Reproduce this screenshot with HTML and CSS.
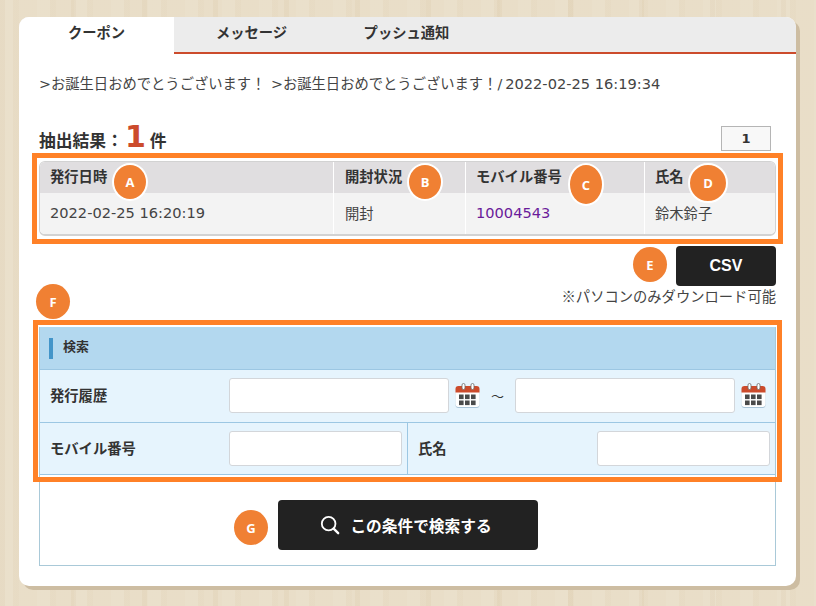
FILE: index.html
```html
<!DOCTYPE html>
<html lang="ja">
<head>
  <meta charset="UTF-8">
  <meta name="viewport" content="width=device-width, initial-scale=1.0">
  <title>クーポン</title>
  <link rel="stylesheet" href="styles.css">
</head>
<body>
  <svg class="defs" width="0" height="0">
    <symbol id="cal" viewBox="0 0 25 25">
      <rect x="0.5" y="3" width="24" height="22" rx="3" fill="#a9c4d8"/>
      <rect x="0.5" y="3" width="24" height="21" rx="3" fill="#ffffff"/>
      <path d="M0.5 9.5V6a3 3 0 0 1 3-3h18a3 3 0 0 1 3 3v3.5z" fill="#cc4b2c"/>
      <rect x="7" y="0.5" width="3" height="6" rx="1.5" fill="#fff" stroke="#6b6b6b" stroke-width="0.8"/>
      <rect x="16" y="0.5" width="3" height="6" rx="1.5" fill="#fff" stroke="#6b6b6b" stroke-width="0.8"/>
      <g fill="#4a4a4a">
        <rect x="4" y="11.5" width="4.6" height="4.6"/><rect x="10" y="11.5" width="4.6" height="4.6"/><rect x="16" y="11.5" width="4.6" height="4.6"/>
        <rect x="4" y="17.5" width="4.6" height="4.6"/><rect x="10" y="17.5" width="4.6" height="4.6"/><rect x="16" y="17.5" width="4.6" height="4.6"/>
      </g>
    </symbol>
  </svg>

  <div class="card">
    <div class="tabs">
      <div class="tab active">クーポン</div>
      <div class="tab">メッセージ</div>
      <div class="tab">プッシュ通知</div>
    </div>

    <div class="content">
      <p class="msg">&gt;お誕生日おめでとうございます！ &gt;お誕生日おめでとうございます！/<span class="num">2022-02-25 16:19:34</span></p>

      <div class="result-head">
        <div class="result-count">抽出結果：<span class="big">1</span> 件</div>
        <div class="pager">1</div>
      </div>

      <div class="result-wrap">
        <table class="result">
          <tr>
            <th class="c1">発行日時</th>
            <th class="c2">開封状況</th>
            <th class="c3">モバイル番号</th>
            <th>氏名</th>
          </tr>
          <tr>
            <td class="num">2022-02-25 16:20:19</td>
            <td>開封</td>
            <td class="num link">10004543</td>
            <td>鈴木鈴子</td>
          </tr>
        </table>
        <div class="frame"></div>
      </div>

      <div class="csv-row"><a class="btn btn-csv">CSV</a></div>
      <p class="note">※パソコンのみダウンロード可能</p>

      <div class="search">
        <div class="search-title"><span>検索</span></div>
        <div class="row">
          <label class="label">発行履歴</label>
          <input class="date-input" type="text">
          <svg class="cal"><use href="#cal"/></svg>
          <span class="tilde">〜</span>
          <input class="date-input" type="text">
          <svg class="cal"><use href="#cal"/></svg>
        </div>
        <div class="row">
          <div class="cell cell-left">
            <label class="label">モバイル番号</label>
            <input class="short-input" type="text">
          </div>
          <div class="cell cell-right">
            <label class="label">氏名</label>
            <input class="short-input" type="text">
          </div>
        </div>
        <div class="submit-row">
          <a class="btn btn-search">
            <svg class="search-icon" width="20" height="20" viewBox="0 0 22 22" fill="none" stroke="#fff">
              <circle cx="9.5" cy="9.5" r="7.5" stroke-width="2"/>
              <path d="M15 15l5 5" stroke-width="2.6" stroke-linecap="round"/>
            </svg>
            この条件で検索する
          </a>
        </div>
        <div class="frame frame-search"></div>
      </div>
    </div>

    <span class="badge badge-a">A</span>
    <span class="badge badge-b">B</span>
    <span class="badge badge-c">C</span>
    <span class="badge badge-d">D</span>
    <span class="badge badge-e">E</span>
    <span class="badge badge-f">F</span>
    <span class="badge badge-g">G</span>
  </div>
</body>
</html>
```

FILE: styles.css
```css
* {
  box-sizing: border-box;
}

html, body {
  height: 100%;
}

body {
  margin: 0;
  padding: 17px 0 0 19px;
  overflow: hidden;
  color: #333333;
  font-family: "DejaVu Sans", "Noto Sans CJK JP", sans-serif;
  font-size: 14.3px;
  background-color: #e8dcc5;
  background-image:
    repeating-linear-gradient(90deg, rgba(255, 255, 255, 0.06) 0 13px, rgba(190, 160, 110, 0.04) 13px 19px, rgba(255, 255, 255, 0) 19px 37px),
    repeating-linear-gradient(90deg, rgba(180, 150, 100, 0.05) 0 5px, rgba(255, 255, 255, 0.05) 5px 71px);
}

.defs {
  position: absolute;
}

.card {
  position: relative;
  width: 777px;
  height: 569px;
  background: #ffffff;
  border-radius: 10px;
  box-shadow: 4px 4px 0 #cdbda2;
}

.tabs {
  display: flex;
  height: 37px;
  background: #ececec;
  border-bottom: 2px solid #cc4b2c;
  border-radius: 10px 10px 0 0;
}

.tab {
  width: 155px;
  height: 35px;
  line-height: 32px;
  text-align: center;
  font-weight: bold;
}

.tab.active {
  height: 37px;
  background: #ffffff;
  border-radius: 10px 0 0 0;
}

.content {
  padding: 0 20px;
}

.msg {
  height: 20px;
  margin: 20px 0 0;
  line-height: 20px;
  color: #444444;
  white-space: nowrap;
  word-spacing: 1px;
}

.num {
  font-size: 14.6px;
}

.msg .num {
  margin-left: 3px;
  word-spacing: 0;
}

.result-head {
  display: flex;
  justify-content: space-between;
  align-items: flex-end;
  height: 25px;
  margin-top: 32px;
  padding-right: 5px;
}

.result-count {
  height: 25px;
  font-size: 16.8px;
  font-weight: bold;
  line-height: 21px;
  white-space: nowrap;
}

.big {
  margin: 0 -2px 0 2px;
  color: #cc4b2c;
  font-size: 30px;
  line-height: 21px;
}

.pager {
  width: 50px;
  height: 25px;
  line-height: 23px;
  border: 1px solid #b5b5b5;
  background: #f8f8f8;
  text-align: center;
  font-size: 13px;
  font-weight: bold;
}

.result-wrap {
  position: relative;
  margin-top: 10px;
}

.result {
  width: 100%;
  height: 75px;
  border-collapse: separate;
  border-spacing: 0;
  border: 1px solid #d2d2d2;
  border-bottom-width: 2px;
  border-radius: 6px;
  overflow: hidden;
  table-layout: fixed;
}

.result th, .result td {
  padding: 0 10px;
  text-align: left;
  border-left: 1px solid #ffffff;
}

.result th:first-child, .result td:first-child {
  border-left: none;
}

.result th:nth-child(2), .result td:nth-child(2) {
  padding-left: 11px;
}

.result th {
  height: 31px;
  background: #e0dee0;
  padding-bottom: 5px;
}

.result td {
  background: #f3f3f3;
  color: #444444;
  padding-bottom: 2px;
}

.result .c1 {
  width: 293px;
}

.result .c2 {
  width: 132px;
}

.result .c3 {
  width: 179px;
}

.result .link {
  color: #6a1b9a;
}

.frame {
  position: absolute;
  top: -8px;
  bottom: -8px;
  left: -7px;
  right: -7px;
  border: 5px solid #ff8127;
  pointer-events: none;
}

.btn {
  display: flex;
  align-items: center;
  justify-content: center;
  background: #222222;
  color: #ffffff;
  border-radius: 4px;
  font-weight: bold;
}

.csv-row {
  display: flex;
  justify-content: flex-end;
  margin-top: 10px;
}

.btn-csv {
  width: 100px;
  height: 40px;
  font-family: "Liberation Sans", sans-serif;
  font-size: 16px;
}

.note {
  margin: 0;
  line-height: 20px;
  text-align: right;
  color: #444444;
  font-family: "Noto Sans CJK JP", sans-serif;
}

.search {
  position: relative;
  margin-top: 21px;
  height: 239px;
  border: 1px solid #a9c9d8;
  border-top: none;
}

.frame-search {
  top: -7px;
  bottom: auto;
  left: -7px;
  right: -7px;
  height: 162px;
}

.search-title {
  display: flex;
  align-items: center;
  height: 43px;
  padding-left: 9px;
  background: #b3d8ef;
  border-bottom: 1px solid #9cc7e3;
  font-size: 13px;
  font-weight: bold;
}

.search-title span {
  padding-left: 10px;
  height: 21px;
  line-height: 18px;
  border-left: 4px solid #4395c9;
}

.row {
  display: flex;
  align-items: center;
  height: 53px;
  background: #e6f4fd;
  border-bottom: 1px solid #9cc7e3;
  padding-bottom: 2px;
}

.row + .row {
  height: 52px;
  padding-bottom: 0;
}

.label {
  flex: none;
  padding-left: 10px;
  padding-bottom: 2px;
  font-weight: bold;
}

.row > .label {
  width: 189px;
}

input {
  height: 35px;
  border: 1px solid #d3d6da;
  border-radius: 3px;
  background: #ffffff;
}

.date-input {
  width: 220px;
}

.cal {
  flex: none;
  width: 25px;
  height: 25px;
  margin-left: 6px;
}

.tilde {
  width: 35px;
  text-align: center;
  font-family: "Noto Sans CJK JP", sans-serif;
  font-size: 13px;
}

.cell {
  display: flex;
  align-items: center;
  height: 100%;
}

.cell-left {
  width: 368px;
  border-right: 1px solid #9cc7e3;
}

.cell-left .label {
  width: 189px;
}

.cell-right {
  flex: 1;
  justify-content: space-between;
  padding-right: 5px;
}

.short-input {
  width: 173px;
}

.submit-row {
  display: flex;
  justify-content: center;
  margin-top: 25px;
}

.btn-search {
  width: 260px;
  height: 50px;
  font-size: 15.7px;
}

.search-icon {
  margin: 0 10px 0 -3px;
}

.badge {
  position: absolute;
  display: flex;
  align-items: center;
  justify-content: center;
  width: 36px;
  height: 38px;
  border: 2px solid #ffffff;
  border-radius: 50%;
  background: #f08033;
  color: #ffffff;
  font-family: "Open Sans", sans-serif;
  font-size: 13px;
  font-weight: bold;
}

.badge-a {
  left: 93px;
  top: 146px;
}

.badge-b {
  left: 388px;
  top: 146px;
}

.badge-c {
  left: 549px;
  top: 146px;
  height: 43px;
}

.badge-d {
  left: 669px;
  top: 146px;
  width: 40px;
  height: 40px;
}

.badge-e {
  left: 614px;
  top: 230px;
  width: 34px;
  height: 35px;
  border: none;
}

.badge-f {
  left: 17px;
  top: 267px;
  width: 34px;
  height: 35px;
  border: none;
}

.badge-g {
  left: 215px;
  top: 493px;
  width: 34px;
  height: 35px;
  border: none;
}
```
